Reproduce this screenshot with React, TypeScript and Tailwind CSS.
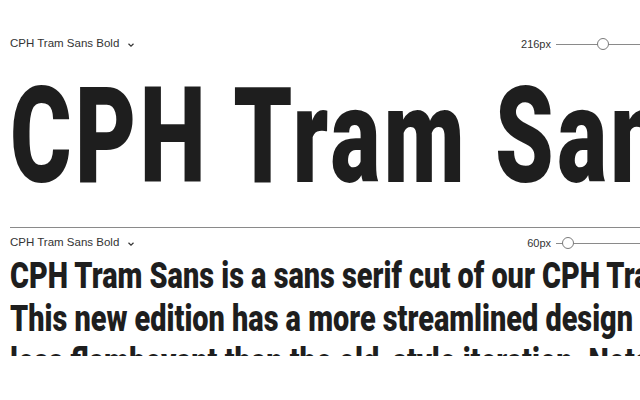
function Chevron() {
  return (
    <svg width="8" height="8" viewBox="0 0 8 8" className="ml-[8px] mt-[1px]">
      <path d="M1.5 2.8 L4 5.2 L6.5 2.8" fill="none" stroke="#333" strokeWidth="1.2" />
    </svg>
  );
}

function Slider({ value, pos }: { value: string; pos: number }) {
  return (
    <div className="flex items-center">
      <span className="text-[11px] text-[#333] mr-[5px]">{value}</span>
      <div className="relative w-[84px] h-[12px] flex items-center">
        <div className="w-full h-px bg-[#8a8a8a]" />
        <div
          className="absolute top-0 w-[12px] h-[12px] rounded-full bg-white border border-[#7a7a7a]"
          style={{ left: pos }}
        />
      </div>
    </div>
  );
}

function Toolbar({ value, pos }: { value: string; pos: number }) {
  return (
    <div className="flex items-center justify-between pl-[10px] h-[14px] font-['Liberation_Sans',Arial,sans-serif]">
      <div className="flex items-center text-[11.5px] text-[#333]">
        CPH Tram Sans Bold
        <Chevron />
      </div>
      <Slider value={value} pos={pos} />
    </div>
  );
}

export default function App() {
  const display = "whitespace-nowrap origin-left font-black font-['Roboto','Liberation_Sans',sans-serif] text-[#1e1e1e]";
  return (
    <div className="w-[640px] h-[400px] bg-white overflow-hidden">
      <div className="pt-[37px]">
        <Toolbar value="216px" pos={41} />
        <div className="h-[176px] overflow-hidden pl-[10px] pt-[6px]">
          <div className={`${display} scale-x-[0.7] tracking-[5px] text-[134px] leading-[160px]`}>CPH Tram Sans Bold</div>
        </div>
      </div>
      <div className="ml-[10px] h-px bg-[#8a8a8a]" />
      <div className="pt-[8px]">
        <Toolbar value="60px" pos={6} />
        <div className="h-[106px] overflow-hidden pl-[10px] pt-[4px]">
          <div className={`${display} scale-x-[0.78] text-[37px] leading-[43px]`}>CPH Tram Sans is a sans serif cut of our CPH Tram typeface.</div>
          <div className={`${display} scale-x-[0.78] text-[37px] leading-[43px]`}>This new edition has a more streamlined design and is</div>
          <div className={`${display} scale-x-[0.78] text-[37px] leading-[43px]`}>less flamboyant than the old-style iteration. Notably,</div>
        </div>
      </div>
    </div>
  );
}
